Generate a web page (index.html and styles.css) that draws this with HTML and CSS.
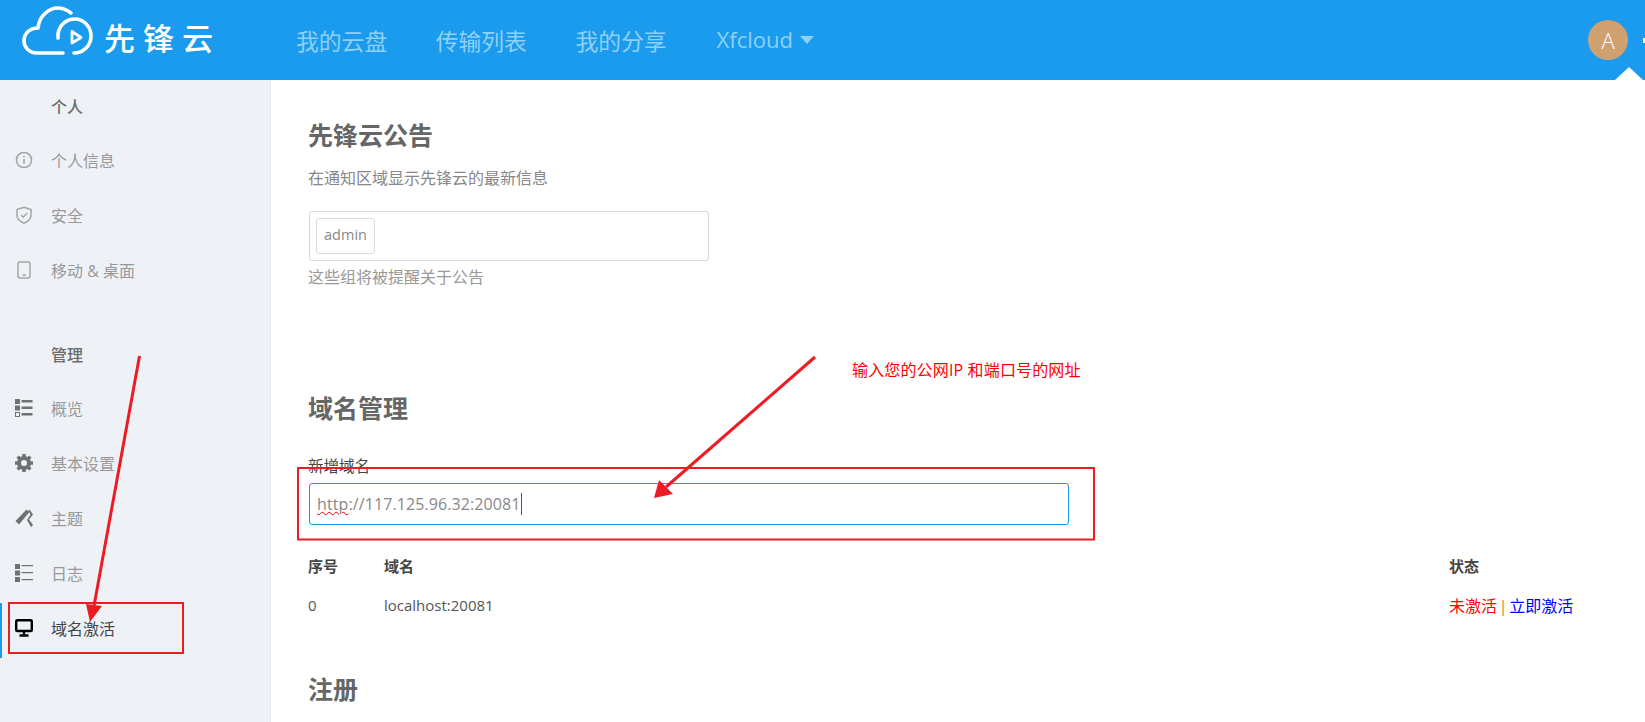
FILE: index.html
```html
<!DOCTYPE html>
<html lang="zh-CN">
<head>
  <meta charset="UTF-8">
  <title>先锋云</title>
  <link rel="stylesheet" href="styles.css">
</head>
<body>

  <header class="topbar">
    <a class="logo">
      <svg class="logo-mark" width="72" height="50" viewBox="22 6 72 50" fill="none" stroke="#fff" stroke-width="3.6" stroke-linecap="round" stroke-linejoin="round">
        <path d="M63 53H37C29 53 24 47 24 41C24 33 30 28 38 28C39 16 49 8 58 8C63 8 67 10 71 13"/>
        <path d="M58 38C57 27 65 19 75 19C84 19 91 27 91 36C91 46 83 53 74 53"/>
        <path d="M72 31.500L81 37.500L72 43Z" stroke-width="2.800"/>
      </svg>
      <span class="logo-text">先锋云</span>
    </a>
    <nav class="nav">
      <a>我的云盘</a>
      <a>传输列表</a>
      <a>我的分享</a>
      <a class="nav-user">Xfcloud<i class="caret"></i></a>
    </nav>
    <div class="avatar">A</div>
    <span class="more"></span>
    <i class="menu-arrow"></i>
  </header>

  <div class="page">
    <aside class="sidebar">
      <div class="side-title">个人</div>
      <a class="side-item">
        <svg class="ico" viewBox="0 0 18 18" fill="none" stroke="#a3a6a9" stroke-width="1.500"><circle cx="9" cy="9" r="7.600"/><path d="M9 8v5M9 5v1.600" stroke-width="1.600"/></svg>
        个人信息
      </a>
      <a class="side-item">
        <svg class="ico" viewBox="0 0 18 18" fill="none" stroke="#a3a6a9" stroke-width="1.500"><path d="M9 1.200L16 3.600V9.500C16 13 13 15.500 9 17.200C5 15.500 2 13 2 9.500V3.600Z"/><path d="M6 9l2.200 2.200L12.200 7"/></svg>
        安全
      </a>
      <a class="side-item">
        <svg class="ico" viewBox="0 0 18 18" fill="none" stroke="#a3a6a9" stroke-width="1.500"><rect x="3" y="1" width="12" height="16" rx="2"/><path d="M7.500 14h3.500"/></svg>
        移动 &amp; 桌面
      </a>

      <div class="side-title side-title-gap">管理</div>
      <a class="side-item">
        <svg class="ico" viewBox="0 0 18 18" fill="#6e7073"><rect x="0" y="0" width="5" height="5"/><rect x="0" y="6.500" width="5" height="5"/><rect x="0.500" y="13.500" width="4" height="4" fill="none" stroke="#6e7073"/><rect x="6.500" y="1" width="11" height="2.500"/><rect x="6.500" y="7.500" width="11" height="2.500"/><rect x="6.500" y="14" width="11" height="2.500"/></svg>
        概览
      </a>
      <a class="side-item">
        <svg class="ico" viewBox="0 0 18 18" fill="none" stroke="#6e7073"><circle cx="9" cy="9" r="5" stroke-width="4"/><path d="M9 0v3.500M9 14.500v3.500M0 9h3.500M14.500 9h3.500M2.600 2.600l2.400 2.400M13 13l2.400 2.400M15.400 2.600L13 5M5 13l-2.400 2.400" stroke-width="3.400"/></svg>
        基本设置
      </a>
      <a class="side-item">
        <svg class="ico" viewBox="0 0 18 18" fill="#6e7073"><path d="M0.500 12L11.500 0.500L14.500 3L4 15.500Z"/><path d="M14.500 0.500L18 5.500L14 10.500L18 16L16 18L12 11L15.500 5.500L13.500 2Z"/></svg>
        主题
      </a>
      <a class="side-item">
        <svg class="ico" viewBox="0 0 18 18" fill="#6e7073"><rect x="0" y="0" width="5" height="5"/><rect x="0" y="6.500" width="5" height="5"/><rect x="0" y="13" width="5" height="5"/><rect x="6.500" y="1" width="11.500" height="1.200"/><rect x="6.500" y="8" width="11.500" height="1.200"/><rect x="6.500" y="15" width="11.500" height="1.200"/></svg>
        日志
      </a>
      <a class="side-item active">
        <svg class="ico" viewBox="0 0 18 18" fill="none" stroke="#000"><rect x="1.200" y="1.200" width="15.600" height="10.800" rx="1" stroke-width="2.400"/><path d="M9 13v3M4.500 16.500h9" stroke-width="2.400"/></svg>
        域名激活
      </a>
    </aside>

    <main class="content">
      <h2 class="first">先锋云公告</h2>
      <p class="desc">在通知区域显示先锋云的最新信息</p>
      <div class="tag-box"><span class="tag">admin</span></div>
      <p class="hint">这些组将被提醒关于公告</p>

      <h2 class="domain-head">域名管理</h2>
      <label class="field-label">新增域名</label>
      <div class="field"><span class="typo">http</span>://117.125.96.32:20081<i class="cursor"></i></div>

      <table class="domains">
        <colgroup><col class="col-no"><col><col class="col-state"></colgroup>
        <thead>
          <tr><th>序号</th><th>域名</th><th>状态</th></tr>
        </thead>
        <tbody>
          <tr>
            <td>0</td>
            <td>localhost:20081</td>
            <td class="state"><span class="red">未激活</span> <span class="pipe">|</span> <span class="blue">立即激活</span></td>
          </tr>
        </tbody>
      </table>

      <h2 class="register-head">注册</h2>
    </main>
  </div>

  <!-- screenshot annotations -->
  <svg class="marks" width="1645" height="722" viewBox="0 0 1645 722" fill="none" stroke="#ed1c24">
    <rect x="9" y="603" width="174" height="50" stroke-width="2"/>
    <rect x="298" y="468" width="796" height="71.500" stroke-width="2"/>
    <path d="M139.500 356L94 606" stroke-width="3"/>
    <path d="M86 604L102 606L90 622Z" fill="#ed1c24" stroke="none"/>
    <path d="M815 357L666 487" stroke-width="3"/>
    <path d="M659 480L673 494L654 498Z" fill="#ed1c24" stroke="none"/>
  </svg>
  <div class="mark-note">输入您的公网IP 和端口号的网址</div>

</body>
</html>
```

FILE: styles.css
```css
* {
  box-sizing: border-box;
}

html, body {
  height: 100%;
}

body {
  margin: 0;
  overflow: hidden;
  position: relative;
  font-family: "Open Sans", "Noto Sans CJK SC", sans-serif;
  font-size: 16px;
  color: #666;
  background: #fff;
}

.topbar {
  height: 80px;
  background: #1a9bee;
  display: flex;
  align-items: center;
  position: relative;
}

.logo {
  display: flex;
  align-items: center;
  margin-left: 22px;
  width: 274px;
  color: #fff;
}

.logo-mark {
  flex: none;
  margin-bottom: 18px;
}

.logo-text {
  margin-left: 10px;
  margin-bottom: 4px;
  font-size: 31px;
  font-weight: 500;
  letter-spacing: 8px;
  line-height: 40px;
}

.nav {
  display: flex;
  gap: 48.500px;
  flex: 1;
  font-size: 22.800px;
  color: #8fd0f8;
}

.nav-user {
  font-size: 22px;
  margin-left: 1.500px;
}

.caret {
  display: inline-block;
  margin-left: 7px;
  vertical-align: 4px;
  border-style: solid;
  border-width: 8px 7px 0 7px;
  border-color: #8fd0f8 transparent transparent transparent;
}

.avatar {
  width: 40px;
  height: 40px;
  border-radius: 50%;
  background: #cfa170;
  color: #fff;
  font-size: 22px;
  line-height: 40px;
  text-align: center;
  font-weight: 300;
}

.more {
  width: 2px;
  height: 5px;
  margin-left: 15px;
  background: #fff;
}

.menu-arrow {
  position: absolute;
  right: 2px;
  bottom: 0;
  border-style: solid;
  border-width: 0 14px 13px 14px;
  border-color: transparent transparent #fff transparent;
}

.page {
  display: flex;
  height: 642px;
}

.sidebar {
  width: 271px;
  flex: none;
  background: #eef2f7;
  border-right: 1px solid #e6eaef;
}

.side-title {
  height: 55px;
  line-height: 55px;
  padding-left: 51px;
  font-size: 16px;
  font-weight: 500;
  color: #6b6b6b;
}

.side-title-gap {
  margin-top: 28px;
}

.side-item {
  height: 55px;
  display: flex;
  align-items: center;
  padding: 0 0 5px 15px;
  color: #999;
  font-size: 16px;
}

.side-item.active {
  color: #444;
  border-left: 2px solid #1a9bee;
  padding-left: 13px;
}

.ico {
  width: 18px;
  height: 18px;
  flex: none;
  margin-right: 18px;
}

.content {
  flex: 1;
  padding-left: 37px;
}

h2 {
  margin: 0;
  font-size: 25px;
  line-height: 30px;
  font-weight: 700;
  color: #666;
}

h2.first {
  margin-top: 40px;
}

.desc, .hint {
  margin: 0;
  line-height: 24px;
  color: #888;
}

.desc {
  margin-top: 16px;
}

.hint {
  margin-top: 4px;
  color: #999;
}

.tag-box {
  width: 400px;
  height: 50px;
  margin: 21px 0 0 1px;
  padding: 6px;
  border: 1px solid #d9d9d9;
  border-radius: 3px;
}

.tag {
  display: block;
  width: 59px;
  height: 36px;
  line-height: 32px;
  text-align: center;
  border: 1px solid #dbdbdb;
  border-radius: 3px;
  font-size: 14.500px;
  color: #888;
}

.domain-head {
  margin-top: 104px;
}

.field-label {
  display: block;
  margin-top: 31px;
  line-height: 24px;
  color: #444;
  font-size: 15.500px;
}

.field {
  width: 760px;
  height: 42px;
  margin: 5px 0 0 1px;
  padding: 0 7px;
  line-height: 40px;
  border: 1px solid #1a9bee;
  border-radius: 3px;
  font-size: 16px;
  letter-spacing: .1px;
  color: #888;
  display: flex;
  align-items: center;
}

.typo {
  text-decoration: underline wavy #e00;
  text-decoration-thickness: 1px;
}

.cursor {
  width: 1px;
  height: 22px;
  background: #555;
}

.domains {
  margin-top: 20px;
  width: 1337px;
  table-layout: fixed;
  border-collapse: collapse;
  font-size: 15px;
}

.col-no {
  width: 76px;
}

.col-state {
  width: 196px;
}

.domains th, .domains td {
  height: 40px;
  padding: 0;
  text-align: left;
}

.domains th {
  color: #444;
  font-weight: 700;
}

.domains td {
  color: #555;
}

.domains td.state {
  font-size: 16px;
  word-spacing: -2.500px;
}

.red {
  color: #f00;
}

.blue {
  color: #00f;
}

.pipe {
  color: #e67e22;
}

.register-head {
  margin-top: 49px;
}

.marks {
  position: absolute;
  left: 0;
  top: 0;
  pointer-events: none;
}

.mark-note {
  position: absolute;
  left: 852px;
  top: 358px;
  color: #f00;
  font-size: 16px;
  letter-spacing: .15px;
  line-height: 24px;
  white-space: nowrap;
}
```
